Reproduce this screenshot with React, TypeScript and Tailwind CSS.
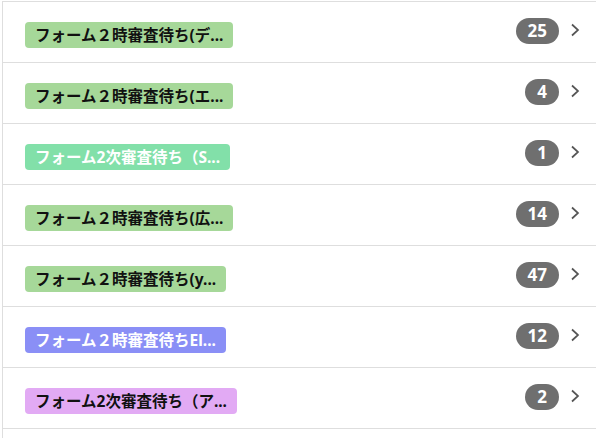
import type { FC } from "react";

type Row = { label: string; count: number; tone: "green" | "mint" | "blue" | "pink" };

const rows: Row[] = [
  { label: "フォーム２時審査待ち(デ...", count: 25, tone: "green" },
  { label: "フォーム２時審査待ち(エ...", count: 4, tone: "green" },
  { label: "フォーム2次審査待ち（S...", count: 1, tone: "mint" },
  { label: "フォーム２時審査待ち(広...", count: 14, tone: "green" },
  { label: "フォーム２時審査待ち(y...", count: 47, tone: "green" },
  { label: "フォーム２時審査待ちEl...", count: 12, tone: "blue" },
  { label: "フォーム2次審査待ち（ア...", count: 2, tone: "pink" },
];

const toneClass = {
  green: "bg-[#a6d899] text-[#111]",
  mint: "bg-[#82e0a9] text-white",
  blue: "bg-[#8a8ff6] text-white",
  pink: "bg-[#e2aaf4] text-[#111]",
};

const Chevron = () => (
  <svg width="10" height="14" viewBox="0 0 10 14" className="mt-[21px] ml-[11px]">
    <polyline points="2,1.5 8,7 2,12.5" fill="none" stroke="#555" strokeWidth="1.7" />
  </svg>
);

const App: FC = () => {
  return (
    <div
      className="ml-[2px] mt-[1px] h-[437px] border-l border-[#dedede] bg-white"
      style={{ fontFamily: '"Noto Sans", "Noto Sans CJK JP", sans-serif' }}
    >
      {rows.map((row, i) => (
        <div key={i} className="flex h-[61px] border-t border-[#dedede] pl-[22px] pr-[16px]">
          <span
            className={`mt-[20px] h-[26px] rounded-[4px] px-[10px] text-[15.5px] font-bold leading-[26px] whitespace-nowrap ${toneClass[row.tone]}`}
          >
            {row.label}
          </span>
          <div className="flex-1" />
          <span className="mt-[16px] h-[26px] min-w-[34px] rounded-full bg-[#6f6f6f] px-[12px] text-center text-[17px] font-bold leading-[26px] text-white">
            {row.count}
          </span>
          <Chevron />
        </div>
      ))}
      <div className="border-t border-[#dedede]" />
    </div>
  );
};

export default App;
